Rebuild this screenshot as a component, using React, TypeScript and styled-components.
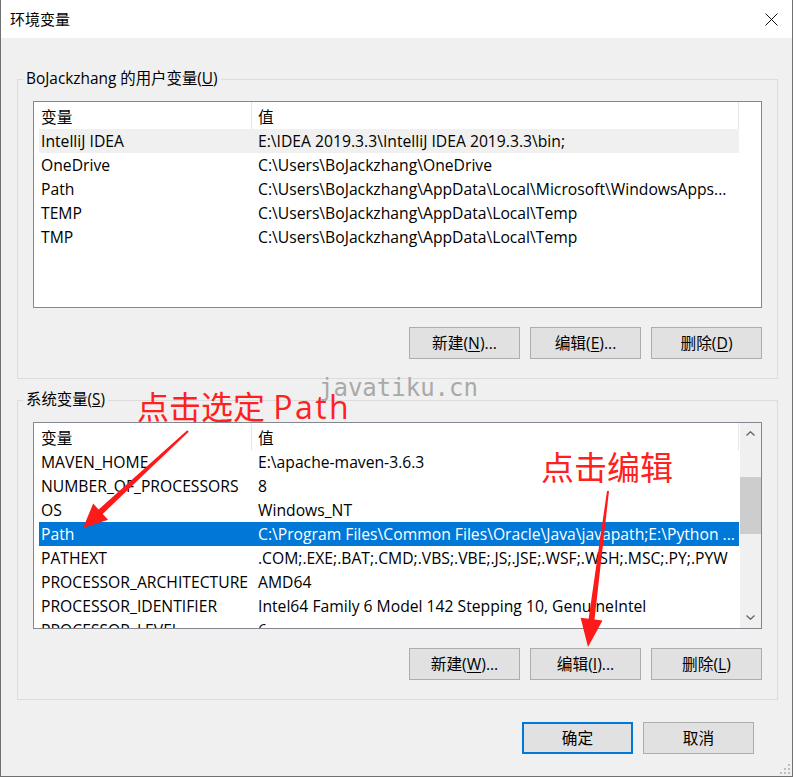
import React from 'react';
import styled, { createGlobalStyle } from 'styled-components';

const GlobalStyle = createGlobalStyle`
  html, body { margin: 0; padding: 0; background: #ffffff; }
  body { font-family: "Open Sans", "Noto Sans CJK SC", sans-serif; }
  * { box-sizing: border-box; }
`;

const Page = styled.div`
  position: relative;
  width: 796px;
  height: 777px;
  overflow: hidden;
`;

const Window = styled.div`
  width: 793px;
  height: 777px;
  border: 1px solid #707070;
  border-top: none;
  background: #f0f0f0;
  display: flex;
  flex-direction: column;
  font-size: 15.7px;
  color: #000;
`;

const TitleBar = styled.div`
  height: 38px;
  background: #ffffff;
  display: flex;
  align-items: center;
  justify-content: space-between;
  padding: 0 14px 0 9px;
  flex-shrink: 0;
`;

const Title = styled.div`
  font-size: 15px;
  line-height: 20px;
  padding-bottom: 1px;
`;

const CloseIcon = styled.svg`
  display: block;
`;

const Body = styled.div`
  flex: 1;
  display: flex;
  flex-direction: column;
  padding: 31px 0 0 16px;
`;

const Group = styled.fieldset<{ $gap?: number }>`
  margin: 0 0 ${(p) => p.$gap ?? 0}px 0;
  width: 761px;
  border: 1px solid #dcdcdc;
  padding: 12px 15px 19px 15px;
  display: flex;
  flex-direction: column;
  gap: 19px;
  min-width: 0;
`;

const Legend = styled.legend`
  font-size: 15.4px;
  line-height: 20px;
  padding: 0 3px;
  margin-left: -10px;
`;

const ListView = styled.div`
  height: 207px;
  border: 1px solid #828790;
  background: #ffffff;
  display: flex;
  overflow: hidden;
  flex-shrink: 0;
`;

const ListBody = styled.div`
  width: 705px;
  display: flex;
  flex-direction: column;
  overflow: hidden;
`;

const HeaderRow = styled.div`
  height: 27px;
  display: flex;
  flex-shrink: 0;
`;

const HeaderCell = styled.div<{ $w: number; $pad: number }>`
  width: ${(p) => p.$w}px;
  padding: 3px 0 0 ${(p) => p.$pad}px;
  line-height: 24px;
  border-right: 1px solid #e5e5e5;
  white-space: nowrap;
`;

const Row = styled.div<{ $state: 'none' | 'inactive' | 'active' }>`
  height: 24px;
  margin-left: 5px;
  width: 700px;
  display: flex;
  flex-shrink: 0;
  line-height: 25px;
  background: ${(p) =>
    p.$state === 'active' ? '#0078d7' : p.$state === 'inactive' ? '#f0f0f0' : 'transparent'};
  color: ${(p) => (p.$state === 'active' ? '#ffffff' : '#000000')};
`;

const NameCell = styled.div`
  width: 212px;
  padding-left: 2px;
  white-space: nowrap;
  overflow: hidden;
`;

const ValueCell = styled.div`
  flex: 1;
  padding-left: 7px;
  white-space: nowrap;
  overflow: hidden;
`;

const ScrollBar = styled.div`
  width: 21px;
  margin-left: auto;
  background: #f0f0f0;
  display: flex;
  flex-direction: column;
`;

const ScrollButton = styled.div`
  height: 21px;
  display: flex;
  align-items: center;
  justify-content: center;
  flex-shrink: 0;
`;

const Track = styled.div`
  flex: 1;
  display: flex;
  flex-direction: column;
  align-items: center;
`;

const Thumb = styled.div<{ $offset: number; $size: number }>`
  width: 21px;
  margin-top: ${(p) => p.$offset}px;
  height: ${(p) => p.$size}px;
  background: #cdcdcd;
`;

const ButtonRow = styled.div`
  display: flex;
  justify-content: flex-end;
  gap: 10px;
`;

const Button = styled.div<{ $default?: boolean }>`
  width: 111px;
  height: 32px;
  background: #e1e1e1;
  border: ${(p) => (p.$default ? '2px solid #0078d7' : '1px solid #adadad')};
  display: flex;
  align-items: center;
  justify-content: center;
  font-size: 15.7px;
  line-height: 20px;
  white-space: nowrap;
  u { text-decoration: underline; text-underline-offset: 2px; }
`;

const Footer = styled.div`
  display: flex;
  justify-content: flex-end;
  gap: 10px;
  padding: 22px 38px 0 0;
`;

const Overlay = styled.div`
  position: absolute;
  inset: 0;
  pointer-events: none;
`;

const Watermark = styled.div`
  position: absolute;
  left: 319px;
  top: 376px;
  font-family: "DejaVu Sans Mono", "Liberation Mono", monospace;
  font-size: 24px;
  line-height: 1;
  color: #a9a9a9;
  white-space: nowrap;
`;

const Note = styled.div<{ $x: number; $y: number; $size: number }>`
  position: absolute;
  left: ${(p) => p.$x}px;
  top: ${(p) => p.$y}px;
  font-family: "Open Sans", "Noto Sans CJK SC", sans-serif;
  font-size: ${(p) => p.$size}px;
  line-height: 1;
  color: #ff2020;
  white-space: nowrap;
`;

const NoteLatin = styled.span`
  letter-spacing: 2.4px;
`;

const Grip = styled.svg`
  position: absolute;
  left: 779px;
  top: 763px;
`;

const ArrowLayer = styled.svg`
  position: absolute;
  left: 0;
  top: 0;
`;

function arrowPoints(
  x1: number, y1: number, x2: number, y2: number,
  headLen: number, headW: number, tailW: number, shaftW: number
) {
  const dx = x2 - x1;
  const dy = y2 - y1;
  const L = Math.hypot(dx, dy);
  const ux = dx / L, uy = dy / L;
  const nx = -uy, ny = ux;
  const bx = x2 - ux * headLen, by = y2 - uy * headLen;
  const pts = [
    [x1 + (nx * tailW) / 2, y1 + (ny * tailW) / 2],
    [bx + (nx * shaftW) / 2, by + (ny * shaftW) / 2],
    [bx + (nx * headW) / 2, by + (ny * headW) / 2],
    [x2, y2],
    [bx - (nx * headW) / 2, by - (ny * headW) / 2],
    [bx - (nx * shaftW) / 2, by - (ny * shaftW) / 2],
    [x1 - (nx * tailW) / 2, y1 - (ny * tailW) / 2],
  ];
  return pts.map((p) => p.map((v) => v.toFixed(1)).join(',')).join(' ');
}

type Var = [string, string];

const userVars: Var[] = [
  ['IntelliJ IDEA', 'E:\\IDEA 2019.3.3\\IntelliJ IDEA 2019.3.3\\bin;'],
  ['OneDrive', 'C:\\Users\\BoJackzhang\\OneDrive'],
  ['Path', 'C:\\Users\\BoJackzhang\\AppData\\Local\\Microsoft\\WindowsApps...'],
  ['TEMP', 'C:\\Users\\BoJackzhang\\AppData\\Local\\Temp'],
  ['TMP', 'C:\\Users\\BoJackzhang\\AppData\\Local\\Temp'],
];

const sysVars: Var[] = [
  ['MAVEN_HOME', 'E:\\apache-maven-3.6.3'],
  ['NUMBER_OF_PROCESSORS', '8'],
  ['OS', 'Windows_NT'],
  ['Path', 'C:\\Program Files\\Common Files\\Oracle\\Java\\javapath;E:\\Python ...'],
  ['PATHEXT', '.COM;.EXE;.BAT;.CMD;.VBS;.VBE;.JS;.JSE;.WSF;.WSH;.MSC;.PY;.PYW'],
  ['PROCESSOR_ARCHITECTURE', 'AMD64'],
  ['PROCESSOR_IDENTIFIER', 'Intel64 Family 6 Model 142 Stepping 10, GenuineIntel'],
  ['PROCESSOR_LEVEL', '6'],
];

const Chevron: React.FC<{ up?: boolean }> = ({ up }) => (
  <svg width="9" height="5" viewBox="0 0 9 5">
    <path
      d={up ? 'M0.5 4.5 L4.5 0.7 L8.5 4.5' : 'M0.5 0.5 L4.5 4.3 L8.5 0.5'}
      fill="none"
      stroke="#606060"
      strokeWidth="1.2"
    />
  </svg>
);

const VarList: React.FC<{ rows: Var[]; selected: number; active: boolean; scroll?: boolean }> = ({
  rows,
  selected,
  active,
  scroll,
}) => (
  <ListView>
    <ListBody>
      <HeaderRow>
        <HeaderCell $w={218} $pad={7}>变量</HeaderCell>
        <HeaderCell $w={487} $pad={6}>值</HeaderCell>
      </HeaderRow>
      {rows.map(([name, value], i) => (
        <Row key={name} $state={i === selected ? (active ? 'active' : 'inactive') : 'none'}>
          <NameCell>{name}</NameCell>
          <ValueCell>{value}</ValueCell>
        </Row>
      ))}
    </ListBody>
    {scroll && (
      <ScrollBar>
        <ScrollButton>
          <Chevron up />
        </ScrollButton>
        <Track>
          <Thumb $offset={33} $size={57} />
        </Track>
        <ScrollButton>
          <Chevron />
        </ScrollButton>
      </ScrollBar>
    )}
  </ListView>
);

export default function App() {
  return (
    <>
      <GlobalStyle />
      <Page>
        <Window>
          <TitleBar>
            <Title>环境变量</Title>
            <CloseIcon width="13" height="13" viewBox="0 0 13 13">
              <path d="M0.5 0.5 L12.5 12.5 M12.5 0.5 L0.5 12.5" stroke="#111" strokeWidth="1" />
            </CloseIcon>
          </TitleBar>
          <Body>
            <Group $gap={11}>
              <Legend>
                BoJackzhang 的用户变量(<u>U</u>)
              </Legend>
              <VarList rows={userVars} selected={0} active={false} />
              <ButtonRow>
                <Button>
                  新建(<u>N</u>)...
                </Button>
                <Button>
                  编辑(<u>E</u>)...
                </Button>
                <Button>
                  删除(<u>D</u>)
                </Button>
              </ButtonRow>
            </Group>
            <Group>
              <Legend>
                系统变量(<u>S</u>)
              </Legend>
              <VarList rows={sysVars} selected={3} active scroll />
              <ButtonRow>
                <Button>
                  新建(<u>W</u>)...
                </Button>
                <Button>
                  编辑(<u>I</u>)...
                </Button>
                <Button>
                  删除(<u>L</u>)
                </Button>
              </ButtonRow>
            </Group>
            <Footer>
              <Button $default>确定</Button>
              <Button>取消</Button>
            </Footer>
          </Body>
        </Window>
        <Overlay>
          <Watermark>javatiku.cn</Watermark>
          <Note $x={137} $y={391} $size={32}>
            点击选定 <NoteLatin>Path</NoteLatin>
          </Note>
          <Note $x={541} $y={451} $size={33}>
            点击编辑
          </Note>
          <ArrowLayer width="796" height="777" viewBox="0 0 796 777">
            <polygon points={arrowPoints(188, 431, 83, 528, 24, 22, 2, 6)} fill="#ff1a1a" />
            <polygon points={arrowPoints(608, 491, 588, 647, 28, 22, 2, 6)} fill="#ff1a1a" />
          </ArrowLayer>
          <Grip width="12" height="12" viewBox="0 0 12 12">
            <g fill="#bdbdbd">
              <rect x="9" y="1" width="2" height="2" />
              <rect x="5" y="5" width="2" height="2" />
              <rect x="9" y="5" width="2" height="2" />
              <rect x="1" y="9" width="2" height="2" />
              <rect x="5" y="9" width="2" height="2" />
              <rect x="9" y="9" width="2" height="2" />
            </g>
          </Grip>
        </Overlay>
      </Page>
    </>
  );
}
